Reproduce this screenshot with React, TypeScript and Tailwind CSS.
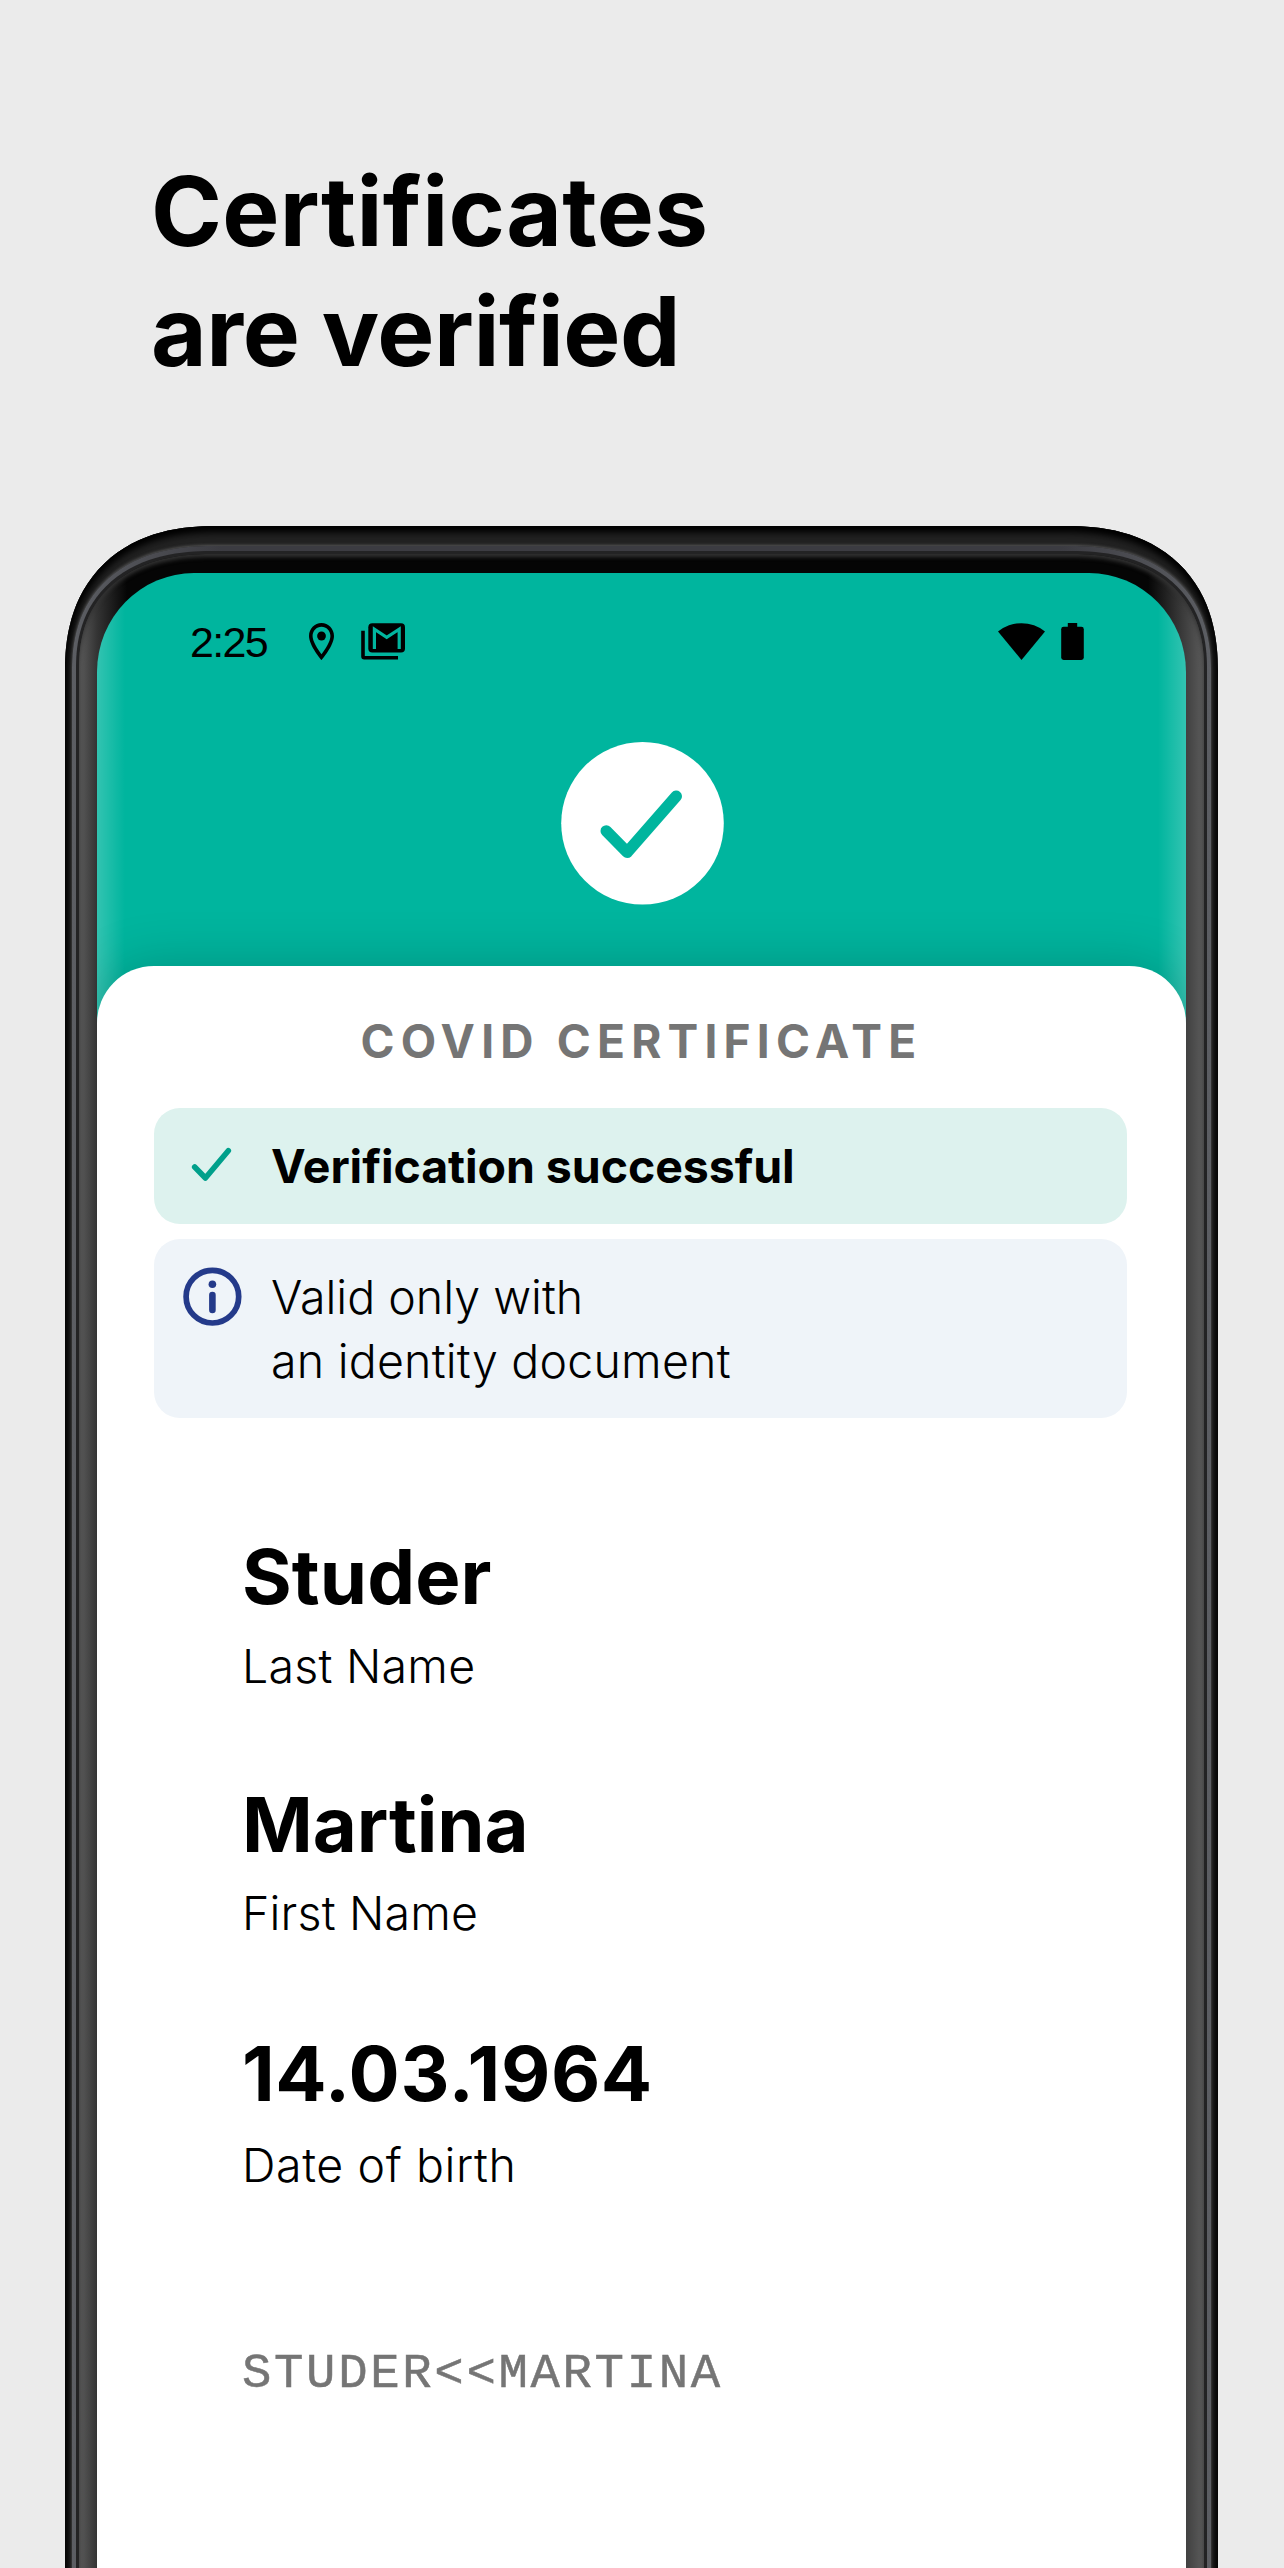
function PinIcon() {
  return (
    <svg className="h-[37px] w-[25px]" viewBox="5 2 14 20" preserveAspectRatio="none" fill="#000">
      <path
        fillRule="evenodd"
        d="M12 2C8.13 2 5 5.13 5 9c0 5.25 7 13 7 13s7-7.75 7-13c0-3.87-3.13-7-7-7zM7 9c0-2.76 2.24-5 5-5s5 2.24 5 5c0 2.88-2.88 7.19-5 9.88C9.92 16.21 7 11.85 7 9z"
      />
      <circle cx="12" cy="9" r="2.45" />
    </svg>
  );
}

function MailStackIcon() {
  return (
    <svg className="h-[37px] w-[44px]" viewBox="0 0 44 37" fill="none">
      <path d="M2 7.7V33.5Q2 34.7 3.2 34.7H37" stroke="#000" strokeWidth="3.6" />
      <rect x="7.3" y="0.2" width="36.7" height="29.3" rx="4" fill="#000" />
      <path d="M13.4 26V6.2L25.7 14.4L38.2 6.2V26" stroke="#00b59e" strokeWidth="3.2" />
    </svg>
  );
}

function WifiIcon() {
  return (
    <svg className="h-[37px] w-[47px]" viewBox="0 0 47 37">
      <path d="M0 8.6A37 37 0 0 1 47 8.6L23.5 37Z" fill="#000" />
    </svg>
  );
}

function BatteryIcon() {
  return (
    <svg className="h-[37px] w-[23px]" viewBox="0 0 23 37" fill="#000">
      <rect x="6.8" y="0" width="9.4" height="6" />
      <rect x="0.2" y="3.8" width="22.6" height="33.2" rx="2.4" />
    </svg>
  );
}

const fields = [
  { value: "Studer", label: "Last Name", v: "tracking-[0.1px]", l: "mt-[16px] tracking-[0.25px]", box: "mt-[112px]" },
  { value: "Martina", label: "First Name", v: "tracking-[-0.1px]", l: "mt-[15px] tracking-[0.2px]", box: "mt-[84px]" },
  { value: "14.03.1964", label: "Date of birth", v: "tracking-[0.6px]", l: "mt-[18px] tracking-[0.6px]", box: "mt-[86px]" },
];

function Certificate() {
  return (
    <section className="mt-[61px] h-[1700px] rounded-t-[57px] bg-white pt-[47px] shadow-[0_0_56px_rgba(0,0,0,0.2)]">
      <h2 className="text-center text-[46px] leading-[56px] font-bold tracking-[6.2px] text-[#757575]">
        COVID CERTIFICATE
      </h2>

      <div className="mt-[39px] ml-[57px] flex w-[973px] flex-col gap-[15px] text-[46.5px]">
        <div className="flex h-[116px] items-center rounded-[26px] bg-[#ddf2ee]">
          <svg className="h-[116px] w-[117px]" viewBox="0 0 117 116" fill="none">
            <path
              d="M40.7 59L51.4 70L74.3 42.7"
              stroke="#00a08b"
              strokeWidth="5.6"
              strokeLinecap="round"
              strokeLinejoin="round"
            />
          </svg>
          <p className="pt-[2px] font-bold tracking-[-0.08px]">Verification successful</p>
        </div>
        <div className="flex h-[179px] items-start rounded-[26px] bg-[#eff4f9]">
          <svg className="h-[116px] w-[117px]" viewBox="0 0 117 116" fill="none" stroke="#243a8a">
            <circle cx="58.4" cy="57.7" r="26.3" strokeWidth="5.7" />
            <path d="M58.4 56V71" strokeWidth="6.6" strokeLinecap="round" />
            <circle cx="58.4" cy="45.3" r="3.8" fill="#243a8a" stroke="none" />
          </svg>
          <p className="pt-[26px] leading-[64px] font-light">
            Valid only with
            <br />
            <span className="tracking-[0.22px]">an identity document</span>
          </p>
        </div>
      </div>

      <dl className="flex flex-col pl-[145px]">
        {fields.map((f) => (
          <div key={f.label} className={`flex flex-col ${f.box}`}>
            <dt className={`text-[76px] leading-[92px] font-bold ${f.v}`}>{f.value}</dt>
            <dd className={`text-[46.5px] leading-[56px] font-light ${f.l}`}>{f.label}</dd>
          </div>
        ))}
      </dl>

      <p className="mt-[153px] pl-[145px] font-['Liberation_Mono',monospace] text-[49px] leading-[56px] tracking-[2.65px] text-[#757575] [-webkit-text-stroke:0.5px_#757575]">
        STUDER&lt;&lt;MARTINA
      </p>
    </section>
  );
}

export default function App() {
  return (
    <main className="flex h-[2568px] w-[1284px] flex-col overflow-hidden bg-[#ebebeb] pt-[151px] font-[Inter,sans-serif] text-black">
      <h1 className="pl-[151px] text-[96px] leading-[120px] font-bold">
        <span className="tracking-[0.3px]">Certificates</span>
        <br />
        <span className="tracking-[-0.4px]">are verified</span>
      </h1>

      {/* Phone body: nested rims, from the outer shell to the display */}
      <div className="mt-[135px] ml-[65px] h-[2200px] w-[1153px] shrink-0 rounded-t-[150px_145px] bg-[#222] px-[7px] pt-[20px] shadow-[inset_0_6px_9px_#000,inset_0_0_7px_2px_#000] [corner-shape:superellipse(1.2)]">
        <div className="h-full rounded-t-[140px_124px] bg-[linear-gradient(to_right,#5c5e63,#3c3c42_150px,#3c3c42_989px,#5c5e63)] px-[4px] pt-[5px] shadow-[0_-1px_3px_#555] [corner-shape:superellipse(1.2)]">
          <div className="h-full rounded-t-[135px_117px] bg-[#232324] px-[3px] pt-[3px] [corner-shape:superellipse(1.2)]">
            <div className="h-full rounded-t-[132px_114px] bg-[linear-gradient(to_right,#5c5c5c,#343434_18px,#050505_48px,#050505_1069px,#343434_1099px,#5c5c5c)] px-[18px] pt-[19px] shadow-[inset_0_3px_4px_#333] [corner-shape:superellipse(1.2)]">
              <div className="h-full overflow-hidden rounded-t-[97px_99px] bg-[#00b59e] bg-[linear-gradient(to_right,rgba(255,255,255,0.2),transparent_28px,transparent_1061px,rgba(255,255,255,0.2))] pt-[50px]">
                <div className="flex h-[37px] items-center pr-[102px] pl-[93px]">
                  <span className="w-[119px] pt-[2px] font-['Liberation_Sans',sans-serif] text-[43px] leading-[37px] tracking-[-1.7px]">
                    2:25
                  </span>
                  <PinIcon />
                  <div className="ml-[27px]">
                    <MailStackIcon />
                  </div>
                  <div className="ml-auto flex gap-[16px]">
                    <WifiIcon />
                    <BatteryIcon />
                  </div>
                </div>

                <svg className="mt-[82px] ml-[464px] h-[163px] w-[163px]" viewBox="0 0 163 163" fill="none">
                  <circle cx="81.5" cy="81.3" r="81.3" fill="#fff" />
                  <path
                    d="M45.3 89L66.2 110.3L115.2 54.3"
                    stroke="#00b59e"
                    strokeWidth="11.6"
                    strokeLinecap="round"
                    strokeLinejoin="round"
                  />
                </svg>

                <Certificate />
              </div>
            </div>
          </div>
        </div>
      </div>
    </main>
  );
}
